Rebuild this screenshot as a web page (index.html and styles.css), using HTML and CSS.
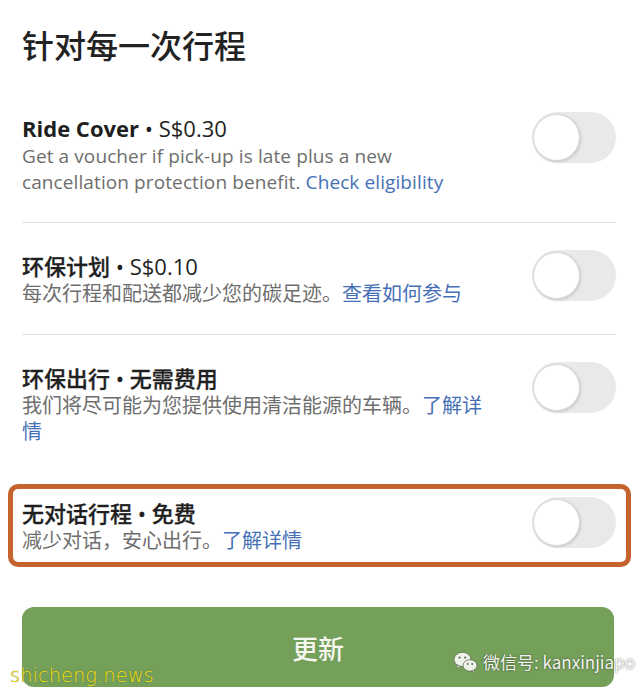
FILE: index.html
```html
<!DOCTYPE html>
<html lang="zh">
<head>
<meta charset="utf-8">
<title>针对每一次行程</title>
<link rel="stylesheet" href="styles.css">
</head>
<body>
<div class="page">
  <h1 class="heading">针对每一次行程</h1>

  <div class="row divided">
    <div class="text">
      <div class="title"><b>Ride Cover</b> • S$0.30</div>
      <div class="desc en">Get a voucher if pick-up is late plus a new cancellation protection benefit. <span class="link">Check eligibility</span></div>
    </div>
    <div class="toggle"><span class="knob"></span></div>
  </div>

  <div class="row divided">
    <div class="text">
      <div class="title"><b class="cjk">环保计划</b> • S$0.10</div>
      <div class="desc">每次行程和配送都减少您的碳足迹。<span class="link">查看如何参与</span></div>
    </div>
    <div class="toggle"><span class="knob"></span></div>
  </div>

  <div class="row last">
    <div class="text">
      <div class="title"><b class="cjk">环保出行 • 无需费用</b></div>
      <div class="desc">我们将尽可能为您提供使用清洁能源的车辆。<span class="link">了解详情</span></div>
    </div>
    <div class="toggle"><span class="knob"></span></div>
  </div>

  <div class="row highlight">
    <div class="text">
      <div class="title"><b class="cjk">无对话行程 • 免费</b></div>
      <div class="desc">减少对话，安心出行。<span class="link">了解详情</span></div>
    </div>
    <div class="toggle"><span class="knob"></span></div>
  </div>

  <div class="button">更新</div>
</div>

<div class="wm-left">shicheng.news</div>
<div class="wm-right">
  <svg class="wechat" width="25" height="22" viewBox="0 0 25 22">
    <ellipse cx="9.5" cy="8.5" rx="8.5" ry="7.2" fill="#eef2e8" stroke="#5a6b50" stroke-width="0.8"/>
    <path d="M4.5 14 L3.5 17.5 L7.5 15.2 Z" fill="#eef2e8" stroke="#5a6b50" stroke-width="0.6"/>
    <circle cx="6.6" cy="6.6" r="1.1" fill="#5a6b50"/>
    <circle cx="12.2" cy="6.6" r="1.1" fill="#5a6b50"/>
    <ellipse cx="17" cy="14.5" rx="7" ry="5.8" fill="#eef2e8" stroke="#5a6b50" stroke-width="0.8"/>
    <path d="M20.5 19 L22 21.5 L18.2 20 Z" fill="#eef2e8" stroke="#5a6b50" stroke-width="0.6"/>
    <circle cx="14.8" cy="13" r="0.9" fill="#5a6b50"/>
    <circle cx="19.2" cy="13" r="0.9" fill="#5a6b50"/>
  </svg>
  <span>微信号: kanxinjiapo</span>
</div>
</body>
</html>
```

FILE: styles.css
```css
* { box-sizing: border-box; }
html, body { margin: 0; padding: 0; background: #ffffff; }
body {
  font-family: "Open Sans", "Noto Sans CJK SC", sans-serif;
  color: #1f1f1f;
  width: 636px;
  height: 692px;
  overflow: hidden;
  position: relative;
}
.page {
  padding: 0 20px 0 22px;
}
.heading {
  margin: 24px 0 21px;
  font-size: 32px;
  line-height: 40px;
  font-weight: 500;
  color: #222;
  font-family: "Noto Sans CJK SC", sans-serif;
}
.row {
  display: flex;
  align-items: flex-start;
  gap: 44px;
  padding: 28px 0 27px;
}
.row.divided { border-bottom: 1px solid #e4e4e4; }
.row.last { padding-bottom: 39px; }
.row.highlight {
  margin: 0 -15px 0 -14px;
  padding: 9px 10px 8px 9px;
  border: 5px solid #c4632d;
  border-radius: 10px;
}
.text { flex: 1; min-width: 0; }
.title {
  font-size: 22px;
  line-height: 30px;
  color: #1f1f1f;
  font-weight: 400;
}
.title b { font-weight: 700; }
.title b.cjk { font-weight: 500; -webkit-text-stroke: 0.3px #1f1f1f; }
.desc {
  font-size: 20px;
  line-height: 26px;
  color: #6e6e6e;
}
.desc.en { font-size: 19px; letter-spacing: 0.1px; }
.link { color: #4670b6; }
.toggle {
  flex: none;
  width: 84px;
  height: 51px;
  margin-top: -1px;
  border-radius: 26px;
  background: #e9e9e9;
  position: relative;
}
.knob {
  position: absolute;
  left: 1px;
  top: 2px;
  width: 47px;
  height: 47px;
  border-radius: 50%;
  background: #fff;
  border: 1px solid #d8d8d8;
  box-shadow: 1px 1px 3px rgba(0,0,0,0.15);
}
.button {
  margin: 40px 2px 0 0;
  height: 80px;
  border-radius: 12px;
  background: #74a05a;
  color: #f6f6f0;
  font-family: "Noto Sans CJK SC", sans-serif;
  font-size: 26px;
  font-weight: 500;
  display: flex;
  align-items: center;
  justify-content: center;
}
.wm-left {
  position: absolute;
  left: 10px;
  top: 663px;
  font-family: "DejaVu Sans", sans-serif;
  font-weight: 200;
  font-size: 19.5px;
  line-height: 26px;
  color: #f2e600;
  text-shadow: 0 0 1px #555;
}
.wm-right {
  position: absolute;
  left: 453px;
  top: 650px;
  display: flex;
  align-items: center;
  gap: 5px;
  color: #f4f4f0;
  font-family: "Noto Sans CJK SC", sans-serif;
  font-size: 17px;
  line-height: 24px;
  text-shadow: 0 0 2px rgba(0,0,0,0.6);
}
.wechat { display: block; }
```
